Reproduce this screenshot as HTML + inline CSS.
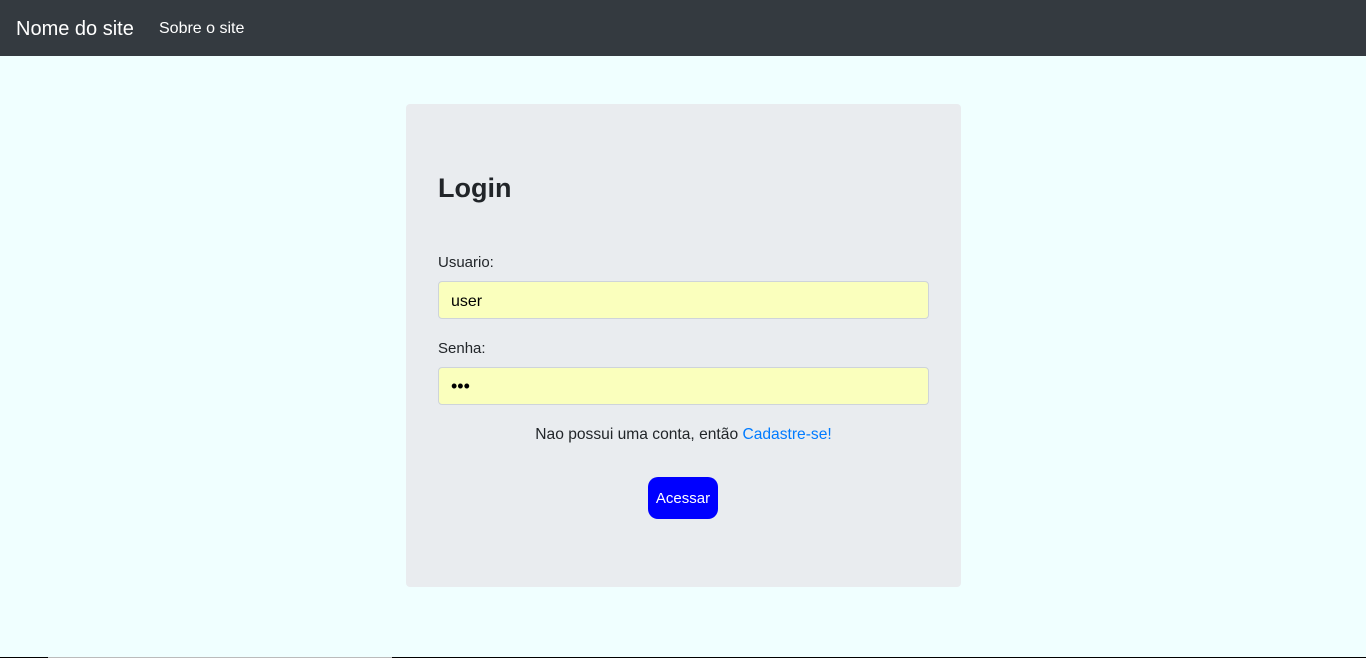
<!DOCTYPE html>
<html><head><meta charset="utf-8"><style>
*{box-sizing:border-box;margin:0;padding:0}
body{width:1366px;height:658px;overflow:hidden;background:#f0ffff;font-family:"Liberation Sans",sans-serif;color:#212529;position:relative}
.nav{height:56px;background:#343a40;position:relative}
.brand{position:absolute;left:16px;top:18px;font-size:20px;color:#fff}
.link{position:absolute;left:159px;top:20px;font-size:16px;color:#fff}
.card{position:absolute;left:406px;top:104px;width:555px;height:483px;background:#e9ecef;border-radius:4px}
h2{position:absolute;left:32px;top:69px;font-size:27px;font-weight:bold;color:#212529}
.lbl{position:absolute;left:32px;font-size:15px}
.inp{position:absolute;left:32px;width:491px;height:38px;background:#faffbd;border:1px solid #ced4da;border-radius:4px;font-size:16px;padding:11px 12px 0;color:#000}
.txt{position:absolute;left:0;width:555px;top:322px;text-align:center;font-size:15.6px}
.txt span{color:#007bff}
.btn{position:absolute;left:242px;top:373px;width:70px;height:42px;background:#0000ff;border-radius:10px;color:#fff;font-size:15px;text-align:center;line-height:44px}
.bl{position:absolute;top:657px;height:1px}
</style></head><body>
<div class="nav"><div class="brand">Nome do site</div><div class="link">Sobre o site</div></div>
<div class="card">
<h2>Login</h2>
<div class="lbl" style="top:150px">Usuario:</div>
<div class="inp" style="top:177px">user</div>
<div class="lbl" style="top:236px">Senha:</div>
<div class="inp" style="top:263px;font-size:18px;padding-top:8px">•••</div>
<div class="txt">Nao possui uma conta, então <span>Cadastre-se!</span></div>
<div class="btn">Acessar</div>
</div>
<div class="bl" style="left:0;width:48px;background:#000"></div>
<div class="bl" style="left:48px;width:344px;background:#bbb"></div>
<div class="bl" style="left:392px;width:974px;background:#000"></div>
</body></html>
